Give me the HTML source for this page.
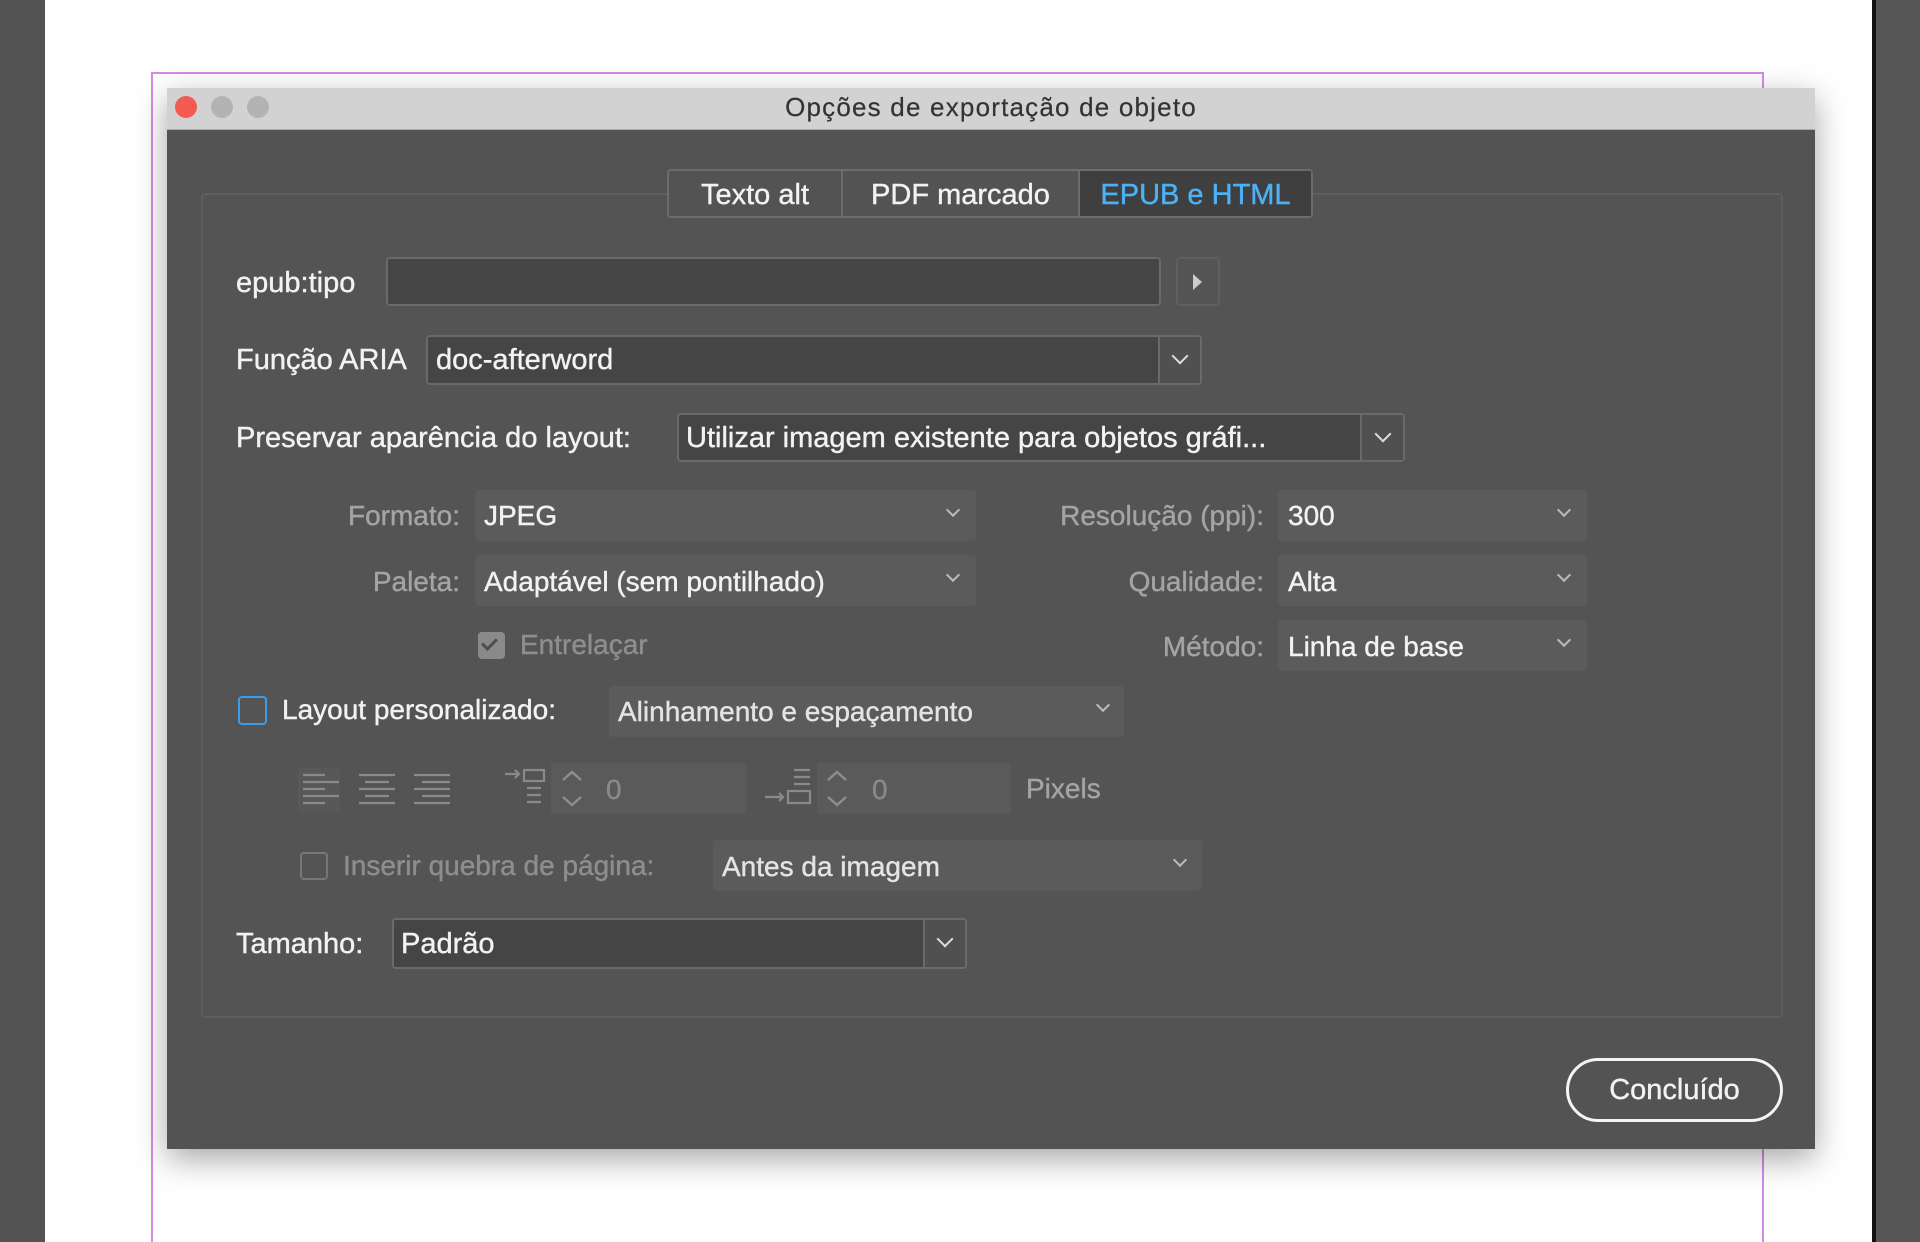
<!DOCTYPE html>
<html><head><meta charset="utf-8"><style>
*{margin:0;padding:0;box-sizing:border-box}
body{width:1920px;height:1242px;background:#fff;position:relative;overflow:hidden;font-family:"Liberation Sans",sans-serif;}
.a{position:absolute}
.t{position:absolute;font-size:28px;color:#f2f2f2;white-space:nowrap;line-height:40px;height:40px;-webkit-text-stroke:0.4px currentColor}
.dis{color:#a4a4a4}
.inp{position:absolute;background:#454545;border:2px solid #6a6a6a;border-radius:4px}
.dd{position:absolute;background:#5b5b5b;border-radius:4px}
.chev{position:absolute;width:12px;height:12px;border-right:2px solid #ddd;border-bottom:2px solid #ddd;transform:rotate(45deg)}
.chevd{border-color:#bbb}
</style></head><body>
<div class="a" style="left:0;top:0;width:45px;height:1242px;background:#535353"></div>
<div class="a" style="left:1872px;top:0;width:4px;height:1242px;background:#111"></div>
<div class="a" style="left:1876px;top:0;width:44px;height:1242px;background:#555"></div>
<div class="a" style="left:151px;top:72px;width:1613px;height:1170px;border:2px solid #d58ae8;border-bottom:none"></div>
<!-- dialog -->
<div class="a" style="left:167px;top:88px;width:1648px;height:1061px;background:#535353;box-shadow:0 10px 30px rgba(0,0,0,.35)"></div>
<div class="a" style="left:167px;top:88px;width:1648px;height:42px;background:#d2d2d2;border-bottom:1px solid #aaa"></div>
<div class="a" style="left:175px;top:96px;width:22px;height:22px;border-radius:50%;background:#f25a52"></div>
<div class="a" style="left:211px;top:96px;width:22px;height:22px;border-radius:50%;background:#b3b3b3"></div>
<div class="a" style="left:247px;top:96px;width:22px;height:22px;border-radius:50%;background:#b3b3b3"></div>
<div class="t" style="left:167px;width:1648px;top:86px;height:42px;line-height:42px;text-align:center;color:#333;font-size:26px;letter-spacing:1.2px;-webkit-text-stroke:0.2px #333">Opções de exportação de objeto</div>
<!-- inner panel -->
<div class="a" style="left:201px;top:193px;width:1582px;height:825px;border:2px solid #5e5e5e;border-radius:4px;background:#545454"></div>
<!-- tabs -->
<div class="a" style="left:667px;top:169px;width:646px;height:49px;border:2px solid #6c6c6c;border-radius:4px;background:#535353"></div>
<div class="a" style="left:1078px;top:171px;width:233px;height:45px;background:#3f3f3f"></div>
<div class="a" style="left:841px;top:171px;width:2px;height:45px;background:#6c6c6c"></div>
<div class="a" style="left:1078px;top:171px;width:2px;height:45px;background:#6c6c6c"></div>
<div class="t" style="left:669px;width:172px;top:175px;text-align:center;font-size:29px">Texto alt</div>
<div class="t" style="left:843px;width:235px;top:175px;text-align:center;font-size:29px">PDF marcado</div>
<div class="t" style="left:1080px;width:231px;top:175px;text-align:center;font-size:29px;color:#4cb1f5">EPUB e HTML</div>
<!-- epub:tipo -->
<div class="t" style="left:236px;top:263px;font-size:29px">epub:tipo</div>
<div class="inp" style="left:386px;top:257px;width:775px;height:49px"></div>
<div class="a" style="left:1176px;top:257px;width:44px;height:49px;border:2px solid #5f5f5f;border-radius:4px"></div>
<div class="a" style="left:1193px;top:274px;width:0;height:0;border-left:9px solid #ccc;border-top:8px solid transparent;border-bottom:8px solid transparent"></div>
<!-- ARIA -->
<div class="t" style="left:236px;top:340px;font-size:29px">Função ARIA</div>
<div class="inp" style="left:426px;top:335px;width:776px;height:50px"></div>
<div class="a" style="left:1158px;top:337px;width:2px;height:46px;background:#6a6a6a"></div>
<div class="a" style="left:1160px;top:337px;width:40px;height:46px;background:#505050"></div>
<div class="t" style="left:436px;top:340px;font-size:29px">doc-afterword</div>
<div class="chev" style="left:1174px;top:350px"></div>
<!-- Preservar -->
<div class="t" style="left:236px;top:418px;font-size:29px">Preservar aparência do layout:</div>
<div class="inp" style="left:677px;top:413px;width:728px;height:49px"></div>
<div class="a" style="left:1360px;top:415px;width:2px;height:45px;background:#6a6a6a"></div>
<div class="a" style="left:1362px;top:415px;width:41px;height:45px;background:#505050"></div>
<div class="t" style="left:686px;top:418px;font-size:29px">Utilizar imagem existente para objetos gráfi...</div>
<div class="chev" style="left:1377px;top:428px"></div>
<!-- Formato -->
<div class="t dis" style="left:260px;width:200px;text-align:right;top:496px">Formato:</div>
<div class="dd" style="left:475px;top:490px;width:501px;height:51px"></div>
<div class="t" style="left:484px;top:496px">JPEG</div>
<div class="chev chevd" style="left:948px;top:505px;width:10px;height:10px"></div>
<div class="t dis" style="left:960px;width:304px;text-align:right;top:496px">Resolução (ppi):</div>
<div class="dd" style="left:1278px;top:490px;width:309px;height:51px"></div>
<div class="t" style="left:1288px;top:496px">300</div>
<div class="chev chevd" style="left:1559px;top:505px;width:10px;height:10px"></div>
<!-- Paleta -->
<div class="t dis" style="left:260px;width:200px;text-align:right;top:562px">Paleta:</div>
<div class="dd" style="left:475px;top:555px;width:501px;height:51px"></div>
<div class="t" style="left:484px;top:562px">Adaptável (sem pontilhado)</div>
<div class="chev chevd" style="left:948px;top:570px;width:10px;height:10px"></div>
<div class="t dis" style="left:960px;width:304px;text-align:right;top:562px">Qualidade:</div>
<div class="dd" style="left:1278px;top:555px;width:309px;height:51px"></div>
<div class="t" style="left:1288px;top:562px">Alta</div>
<div class="chev chevd" style="left:1559px;top:570px;width:10px;height:10px"></div>
<!-- Entrelaçar -->
<div class="a" style="left:478px;top:632px;width:27px;height:27px;border-radius:4px;background:#8a8a8a"></div>
<div class="a" style="left:485px;top:635px;width:9px;height:15px;border-right:3px solid #4e4e4e;border-bottom:3px solid #4e4e4e;transform:rotate(45deg)"></div>
<div class="t dis" style="left:520px;top:625px;color:#8e8e8e">Entrelaçar</div>
<div class="t dis" style="left:960px;width:304px;text-align:right;top:627px">Método:</div>
<div class="dd" style="left:1278px;top:620px;width:309px;height:51px"></div>
<div class="t" style="left:1288px;top:627px">Linha de base</div>
<div class="chev chevd" style="left:1559px;top:635px;width:10px;height:10px"></div>
<!-- Layout personalizado -->
<div class="a" style="left:238px;top:696px;width:29px;height:29px;border:2px solid #3b9de8;border-radius:4px"></div>
<div class="t" style="left:282px;top:690px">Layout personalizado:</div>
<div class="dd" style="left:609px;top:686px;width:515px;height:51px"></div>
<div class="t" style="left:618px;top:692px;color:#e4e4e4">Alinhamento e espaçamento</div>
<div class="chev chevd" style="left:1098px;top:700px;width:10px;height:10px"></div>
<!-- align icons -->
<svg class="a" style="left:295px;top:760px" width="480" height="60" viewBox="0 0 480 60">
<g stroke="#8a8a8a" stroke-width="2.2" fill="none">
<rect x="3" y="8" width="42" height="44" fill="#585858" stroke="none"/>
<path d="M8 15h22M8 22h36M8 29h22M8 36h36M8 43h22"/>
<path d="M64 15h36M70 22h24M64 29h36M70 36h24M64 43h36"/>
<path d="M119 15h36M127 22h28M119 29h36M127 36h28M119 43h36"/>
<path d="M210 14h14M220 10l4 4-4 4"/>
<rect x="229" y="10" width="20" height="11"/>
<path d="M232 28h14M232 35h14M232 42h14"/>
</g>
<rect x="256" y="3" width="42" height="51" fill="#5a5a5a"/>
<rect x="298" y="3" width="153" height="51" fill="#5a5a5a"/>
<path d="M268 20l9-8 9 8M268 37l9 8 9-8" stroke="#8e8e8e" stroke-width="2.4" fill="none"/>
</svg>
<div class="t dis" style="left:606px;top:770px;color:#8a8a8a">0</div>
<svg class="a" style="left:760px;top:760px" width="260" height="60" viewBox="0 0 260 60">
<g stroke="#8a8a8a" stroke-width="2.2" fill="none">
<path d="M34 10h16M34 17h16M34 24h16"/>
<rect x="28" y="31" width="22" height="12"/>
<path d="M5 37h18M19 33l4 4-4 4"/>
</g>
<rect x="57" y="3" width="40" height="51" fill="#5a5a5a"/>
<rect x="97" y="3" width="154" height="51" fill="#5a5a5a"/>
<path d="M68 20l9-8 9 8M68 37l9 8 9-8" stroke="#8e8e8e" stroke-width="2.4" fill="none"/>
</svg>
<div class="t dis" style="left:872px;top:770px;color:#8a8a8a">0</div>
<div class="t dis" style="left:1026px;top:769px">Pixels</div>
<!-- Inserir quebra -->
<div class="a" style="left:300px;top:852px;width:28px;height:28px;border:2px solid #777;border-radius:4px"></div>
<div class="t dis" style="left:343px;top:846px;color:#8e8e8e">Inserir quebra de página:</div>
<div class="dd" style="left:713px;top:840px;width:489px;height:51px"></div>
<div class="t" style="left:722px;top:847px;color:#e4e4e4">Antes da imagem</div>
<div class="chev chevd" style="left:1175px;top:855px;width:10px;height:10px"></div>
<!-- Tamanho -->
<div class="t" style="left:236px;top:924px;font-size:29px">Tamanho:</div>
<div class="inp" style="left:392px;top:918px;width:575px;height:51px"></div>
<div class="a" style="left:923px;top:920px;width:2px;height:47px;background:#6a6a6a"></div>
<div class="a" style="left:925px;top:920px;width:40px;height:47px;background:#505050"></div>
<div class="t" style="left:401px;top:924px;font-size:29px">Padrão</div>
<div class="chev" style="left:939px;top:933px"></div>
<!-- button -->
<div class="a" style="left:1566px;top:1058px;width:217px;height:64px;border:3px solid #f4f4f4;border-radius:32px"></div>
<div class="t" style="left:1566px;width:217px;text-align:center;top:1070px;font-size:29px">Concluído</div>
</body></html>
